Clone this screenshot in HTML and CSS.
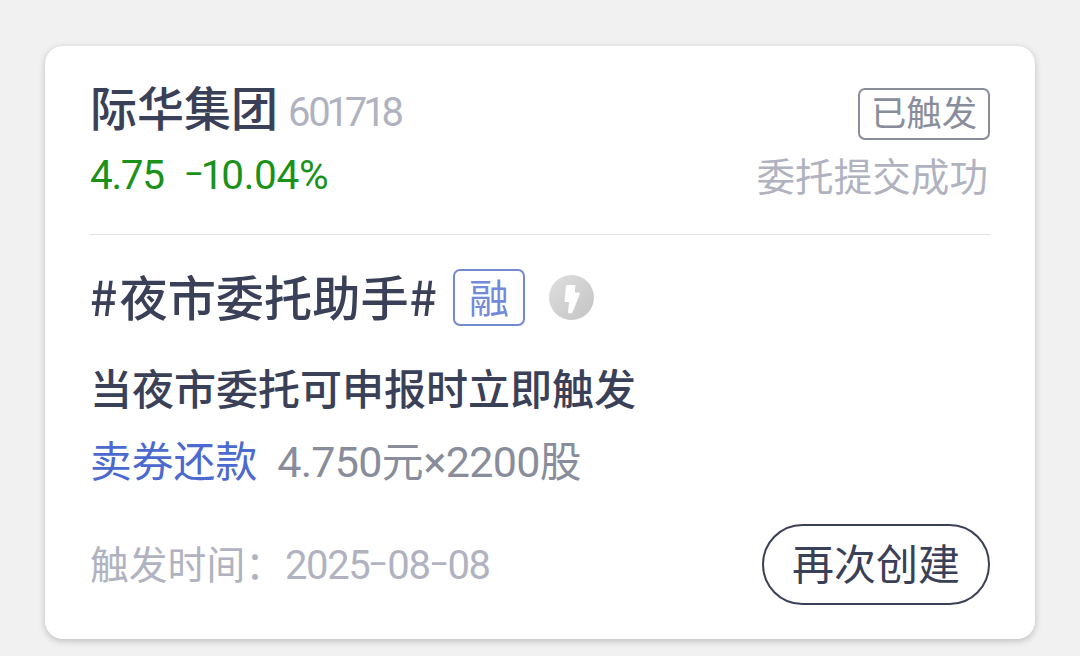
FILE: index.html
```html
<!DOCTYPE html>
<html lang="zh-CN">
<head>
    <meta charset="UTF-8">
    <meta name="viewport" content="width=device-width, initial-scale=1.0">
    <title>条件单</title>
    <link rel="stylesheet" href="styles.css">
</head>
<body>
    <div class="card">
        <div class="card-header">
            <div class="stock">
                <div class="stock-title">
                    <span class="stock-name">际华集团</span>
                    <span class="stock-code">60<span class="one">1</span>7<span class="one">1</span>8</span>
                </div>
                <div class="stock-price">
                    <span class="price">4.75</span>
                    <span class="change"><span class="dash">-</span><span class="one">1</span>0.04%</span>
                </div>
            </div>
            <div class="status">
                <span class="status-tag">已触发</span>
                <span class="status-text">委托提交成功</span>
            </div>
        </div>

        <div class="strategy">
            <span class="strategy-name">#<span class="strategy-text">夜市委托助手</span>#</span>
            <span class="margin-tag">融</span>
            <svg class="flash-icon" viewBox="0 0 45 45">
                <defs>
                    <linearGradient id="flashBg" x1="0" y1="0" x2="1" y2="1">
                        <stop offset="0" stop-color="#dedede"/>
                        <stop offset="1" stop-color="#c4c4c4"/>
                    </linearGradient>
                </defs>
                <circle cx="22.5" cy="22.5" r="22.5" fill="url(#flashBg)"/>
                <path d="M18 11h7.500l-0.800 7.500h5.300l-7.500 18.800h-2.500l1.200-11.300h-4.700z" fill="#fff" stroke="#fff" stroke-width="2" stroke-linejoin="round"/>
            </svg>
        </div>

        <div class="condition">当夜市委托可申报时立即触发</div>

        <div class="order">
            <span class="order-type">卖券还款</span>
            <span class="order-detail"><span class="num">4.750</span>元<span class="num">×2200</span>股</span>
        </div>

        <div class="card-footer">
            <div class="trigger-time">
                <span>触发时间：</span>
                <span class="date">2025<span class="dash">-</span>08<span class="dash">-</span>08</span>
            </div>
            <button class="create-btn" type="button">再次创建</button>
        </div>
    </div>
</body>
</html>
```
FILE: styles.css
```css
* {
    box-sizing: border-box;
}

body {
    margin: 0;
    padding: 46px 45px 17px;
    height: 656px;
    overflow: hidden;
    background-color: #f1f1f1;
    font-family: "Noto Sans CJK SC", sans-serif;
    color: #3a4057;
    white-space: nowrap;
}

.card {
    height: 593px;
    padding: 30px 45px 0;
    background-color: #fff;
    border-radius: 18px;
    box-shadow: 0 2px 7px rgba(0, 0, 0, 0.22);
}

.card-header {
    display: flex;
    justify-content: space-between;
    height: 159px;
    border-bottom: 1px solid #e3e3e5;
}

.stock-title {
    display: flex;
    gap: 10px;
    height: 60px;
    line-height: 60px;
}

.stock-name {
    font-size: 47px;
    font-weight: 500;
}

.stock-code,
.stock-price,
.num,
.date {
    font-family: Roboto, "Noto Sans CJK SC", sans-serif;
}

.stock-code {
    padding-top: 7px;
    font-size: 40px;
    letter-spacing: -2.200px;
    color: #b0b3bf;
}

.one {
    margin: 0 -2px;
}

/* the hyphen is wider and sits higher than the font's own */
.dash {
    display: inline-block;
    width: 18px;
    text-align: center;
    letter-spacing: 0;
    transform: translateY(-3px) scale(1.500, 0.900);
}

.stock-price {
    display: flex;
    gap: 21px;
    padding-top: 9px;
    line-height: 60px;
    font-size: 40.500px;
    letter-spacing: -0.300px;
    color: #1a921a;
}

.price {
    letter-spacing: -1.300px;
}

.status {
    display: flex;
    flex-direction: column;
    align-items: flex-end;
    padding-top: 12px;
}

.status-tag {
    width: 132px;
    height: 52px;
    border: 2px solid #898d9b;
    border-radius: 7px;
    line-height: 42px;
    font-size: 35.400px;
    text-align: center;
    color: #898d9b;
}

.status-text {
    padding: 6px 2px 0 0;
    line-height: 56px;
    font-size: 38.600px;
    color: #b0b3bf;
}

.strategy {
    display: flex;
    align-items: center;
    height: 57px;
    margin-top: 34px;
}

.strategy-name {
    padding-bottom: 5px;
    font-size: 48.200px;
    font-weight: 500;
    line-height: 52px;
}

.strategy-text {
    margin: 0 1px 0 2px;
}

.margin-tag {
    width: 72px;
    height: 57px;
    margin-left: 16px;
    border: 2px solid #7389d2;
    border-radius: 7px;
    line-height: 50px;
    font-size: 40px;
    text-align: center;
    color: #7389d9;
}

.flash-icon {
    width: 45px;
    height: 45px;
    margin-left: 24px;
}

.condition {
    margin-top: 31px;
    line-height: 60px;
    font-size: 42px;
    font-weight: 500;
}

.order {
    display: flex;
    gap: 20px;
    margin-top: 12px;
    line-height: 60px;
    font-size: 41.800px;
}

.order-type {
    color: #4c69cf;
}

.order-detail {
    color: #898d9b;
}

.num {
    font-size: 43px;
    letter-spacing: -0.700px;
}

.card-footer {
    display: flex;
    align-items: center;
    justify-content: space-between;
    margin-top: 32px;
}

.trigger-time {
    display: flex;
    align-items: baseline;
    padding-bottom: 6px;
    font-size: 38.800px;
    color: #b0b3bf;
}

.date {
    padding-left: 1px;
    font-size: 40px;
    letter-spacing: -1.400px;
}

.create-btn {
    width: 228px;
    height: 81px;
    padding: 0 0 6px;
    border: 2px solid #3a4057;
    border-radius: 41px;
    background: none;
    font-family: inherit;
    font-size: 42px;
    color: #3a4057;
}
```
